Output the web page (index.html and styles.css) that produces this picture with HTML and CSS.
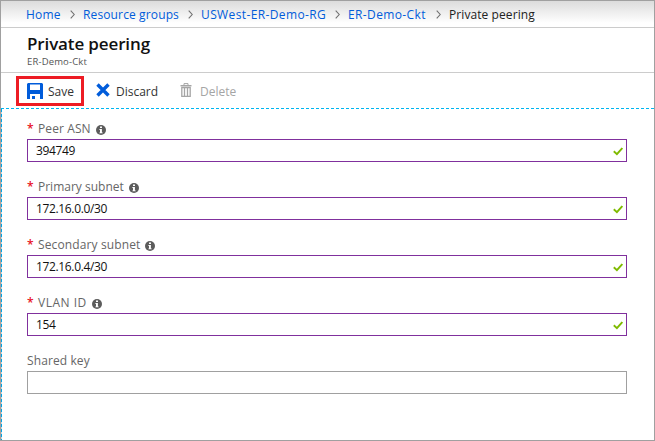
FILE: index.html
```html
<!DOCTYPE html>
<html lang="en">
<head>
<meta charset="utf-8">
<title>Private peering</title>
<link rel="stylesheet" href="styles.css">
</head>
<body>
<svg class="defs" width="0" height="0">
  <symbol id="chevron" viewBox="0 0 5 9"><path d="M.7 .7 4.2 4.5 .7 8.3" fill="none" stroke="#707070" stroke-width="1.1"/></symbol>
  <symbol id="info" viewBox="0 0 10 10"><circle cx="5" cy="5" r="5" fill="#5c5c5c"/><path d="M4 1.6h2v1.5H4zM3.4 4h2.5v3.4h.8v.9H3.4v-.9H4V4.9h-.6z" fill="#fff"/></symbol>
  <symbol id="check" viewBox="0 0 10 9"><path d="M.8 4.3 3.9 7.2 9.3 1" fill="none" stroke="#7fba00" stroke-width="1.9"/></symbol>
</svg>
<div class="window">
  <nav class="crumbs">
    <a class="home">Home</a><svg class="chev"><use href="#chevron"/></svg>
    <a class="groups">Resource groups</a><svg class="chev"><use href="#chevron"/></svg>
    <a class="rg">USWest-ER-Demo-RG</a><svg class="chev"><use href="#chevron"/></svg>
    <a class="ckt">ER-Demo-Ckt</a><svg class="chev"><use href="#chevron"/></svg>
    <span class="current">Private peering</span>
  </nav>
  <header class="heading">
    <h1>Private peering</h1>
    <p>ER-Demo-Ckt</p>
  </header>
  <div class="toolbar">
    <button class="save"><svg width="16" height="16" viewBox="0 0 16 16"><path fill="#015cda" fill-rule="evenodd" d="M1 0h14l1 1v15h-3v-5H3v5H0V1zM3 1.5V7h10V1.5zM5 13h3v3H5z"/></svg><span>Save</span></button>
    <button class="discard"><svg width="14" height="14" viewBox="0 0 14 14"><path d="M1.5 1.5 12.5 12.5M12.5 1.5 1.5 12.5" stroke="#015cda" stroke-width="3.4"/></svg><span>Discard</span></button>
    <button class="delete"><svg width="12" height="14" viewBox="0 0 12 14" fill="none" stroke="#a5a5a5"><path d="M4 2V.6h4V2" /><path d="M.5 2.7h11" stroke-width="1.4"/><path d="M1.8 4.5v8.8h8.4V4.5zM4.5 5v8M7.5 5v8" stroke-width="1.3"/></svg><span>Delete</span></button>
  </div>
  <main class="form">
    <div class="field asn"><label><b>*</b><span>Peer ASN</span><svg class="info"><use href="#info"/></svg></label><div class="input"><span>394749</span><svg class="check"><use href="#check"/></svg></div></div>
    <div class="field primary"><label><b>*</b><span>Primary subnet</span><svg class="info"><use href="#info"/></svg></label><div class="input"><span>172.16.0.0/30</span><svg class="check"><use href="#check"/></svg></div></div>
    <div class="field secondary"><label><b>*</b><span>Secondary subnet</span><svg class="info"><use href="#info"/></svg></label><div class="input"><span>172.16.0.4/30</span><svg class="check"><use href="#check"/></svg></div></div>
    <div class="field vlan"><label><b>*</b><span>VLAN ID</span><svg class="info"><use href="#info"/></svg></label><div class="input"><span>154</span><svg class="check"><use href="#check"/></svg></div></div>
    <div class="field key"><label><span>Shared key</span></label><div class="input"></div></div>
  </main>
</div>
</body>
</html>
```
FILE: styles.css
```css
* { box-sizing: border-box; }
body { margin: 0; font: 12px/16px "Open Sans", "Noto Sans", sans-serif; color: #222; background: #fff; }
.defs { position: absolute; }
svg { display: block; flex: none; }
.window { width: 655px; height: 441px; border: 1px solid #a0a0a0; display: flex; flex-direction: column; overflow: hidden; }
.crumbs { height: 27px; flex: none; padding: 1px 0 0 25px; border-bottom: 1px solid #ccc; background: linear-gradient(#dcdcdc, #fff 22px); display: flex; align-items: center; white-space: nowrap; }
.crumbs a { color: #015cda; }
.chev { width: 5px; height: 9px; margin-right: 8px; }
.home { width: 44px; letter-spacing: .2px; }
.groups { width: 105px; letter-spacing: .13px; }
.rg { width: 134px; letter-spacing: .38px; }
.ckt { width: 88px; letter-spacing: .38px; }
.current { letter-spacing: .08px; }
.heading { height: 45px; flex: none; padding: 5px 0 0 26px; border-bottom: 1px solid #ccc; }
h1 { margin: 0; font-size: 17px; line-height: 22px; font-weight: 600; letter-spacing: -.13px; color: #111; }
p { margin: 1px 0 0; font-size: 9.5px; line-height: 12px; letter-spacing: .15px; color: #555; }
.toolbar { height: 35px; flex: none; padding: 3px 0 2px 15px; display: flex; }
button { font: inherit; color: #333; border: 0; background: none; padding: 0; height: 30px; display: flex; align-items: center; }
button span { padding-top: 2px; }
.save { width: 68px; border: 3px solid #ed1c24; padding: 0 0 1px 8px; }
.save svg { margin-right: 5px; }
.discard { padding-left: 12px; width: 96px; }
.discard svg { margin: -2px 6px 0 0; }
.delete { color: #a5a5a5; }
.delete svg { margin: -2px 8px 0 0; }
.form { flex: 1; border-top: 1px dashed #00b5f0; padding: 11px 0 0 26px; background: repeating-linear-gradient(#00a5e5 0 3px, #d5d5d5 3px 5px) left / 1px 100% no-repeat; }
.field { width: 600px; height: 58px; }
label { height: 19px; padding-bottom: 2px; display: flex; align-items: center; color: #666; white-space: nowrap; }
label b { width: 11px; padding-top: 1px; color: #e81123; font-size: 12px; font-weight: 600; }
.info { width: 10px; height: 10px; margin: 2px 0 0 5px; }
.asn label span { letter-spacing: .1px; }
.secondary label span { letter-spacing: .12px; }
.vlan label span { letter-spacing: .5px; }
.key label span { letter-spacing: .1px; }
.input { height: 23px; border: 1px solid #80309d; padding: 0 3px 0 8px; display: flex; align-items: center; justify-content: space-between; letter-spacing: -.35px; color: #111; }
.check { width: 10px; height: 9px; margin-top: 1px; }
.key .input { border-color: #a0a0a0; }
```
